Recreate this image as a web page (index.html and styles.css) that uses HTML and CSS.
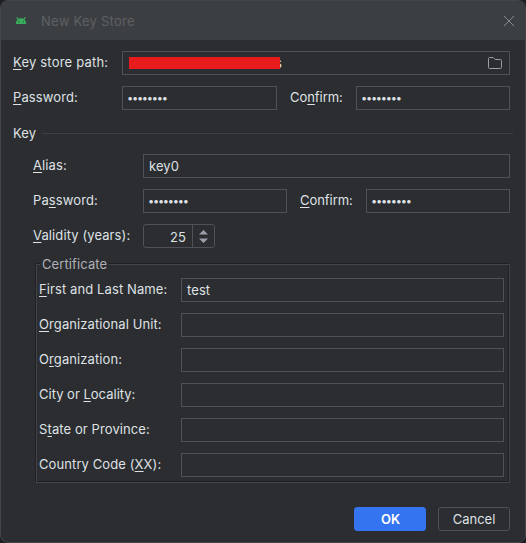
FILE: index.html
```html
<!DOCTYPE html>
<html lang="en">
<head>
<meta charset="utf-8">
<title>New Key Store</title>
<link rel="stylesheet" href="styles.css">
</head>
<body>
<div class="dialog">
  <header class="titlebar">
    <svg class="android" width="12" height="12" viewBox="0 0 12 12"><path d="M1.900 2.200 3.400 5M10.100 2.200 8.600 5" stroke="#38ad5c" stroke-width="1.300"/><path fill="#38ad5c" fill-rule="evenodd" d="M.8 9C1 5.500 3.200 3.300 6 3.300s5 2.200 5.200 5.700ZM3.200 6.300v1h1v-1ZM7.800 6.300v1h1v-1Z"/></svg>
    <h1>New Key Store</h1>
    <svg class="close" width="12" height="12" viewBox="0 0 12 12"><path d="M1 1 11 11M11 1 1 11" stroke="#898c91" fill="none"/></svg>
  </header>
  <main class="content">
    <div class="row store">
      <label class="path-label"><u>K</u>ey store path:</label>
      <div class="field path"><span class="redaction"></span><span class="tail">s</span>
        <svg width="16" height="16" viewBox="0 0 16 16"><path d="M1.500 3.500q0-1 1-1h3.700l2 2h5.300q1 0 1 1v7q0 1-1 1h-11q-1 0-1-1Z" stroke="#9a9da3" fill="none"/></svg>
      </div>
    </div>
    <div class="row store">
      <label><u>P</u>assword:</label>
      <div class="field half dots">••••••••</div>
      <label class="confirm">Co<u>n</u>firm:</label>
      <div class="field dots">••••••••</div>
    </div>
    <div class="separator"><span>Key</span></div>
    <section class="key">
      <div class="row">
        <label><u>A</u>lias:</label>
        <div class="field">key0</div>
      </div>
      <div class="row">
        <label>Pa<u>s</u>sword:</label>
        <div class="field half dots">••••••••</div>
        <label class="confirm"><u>C</u>onfirm:</label>
        <div class="field dots">••••••••</div>
      </div>
      <div class="row">
        <label><u>V</u>alidity (years):</label>
        <div class="spinner"><span>25</span><svg width="21" height="22" viewBox="0 0 21 22"><path fill="#9da0a8" d="M6 9.500 10.500 5 15 9.500ZM6 13.500 10.500 18 15 13.500Z"/></svg></div>
      </div>
    </section>
    <section class="certificate">
      <h2>Certificate</h2>
      <div class="row"><label><u>F</u>irst and Last Name:</label><div class="field">test</div></div>
      <div class="row"><label><u>O</u>rganizational Unit:</label><div class="field"></div></div>
      <div class="row"><label>O<u>r</u>ganization:</label><div class="field"></div></div>
      <div class="row"><label class="tight">City or <u>L</u>ocality:</label><div class="field"></div></div>
      <div class="row"><label>S<u>t</u>ate or Province:</label><div class="field"></div></div>
      <div class="row"><label>Country Code (<u>X</u>X):</label><div class="field"></div></div>
    </section>
    <footer class="actions">
      <button class="primary">OK</button>
      <button>Cancel</button>
    </footer>
  </main>
</div>
</body>
</html>
```
FILE: styles.css
```css
* { box-sizing: border-box; }
body {
  margin: 0;
  background: #1e1f22;
  color: #dfe1e5;
  font: 13px/16px Inter, "Liberation Sans", sans-serif;
  letter-spacing: .1px;
}
.dialog {
  width: 526px;
  height: 543px;
  border: 1px solid #434549;
  border-radius: 8px;
  background: #2b2d30;
  overflow: hidden;
}
.titlebar {
  display: flex;
  align-items: center;
  height: 39px;
  padding: 0 10px 0 14px;
  background: #3c3f41;
}
.titlebar h1 {
  flex: 1;
  margin: 0 0 0 14px;
  font-size: 13px;
  font-weight: 400;
  letter-spacing: .25px;
  color: #5c5f64;
}
.content { padding: 11px 15px 0 12px; }
.row { display: flex; height: 24px; margin-bottom: 11px; }
label { flex: none; width: 109px; padding-top: 3px; white-space: nowrap; }
.path-label { letter-spacing: .2px; }
.tight { letter-spacing: 0; }
u { text-decoration-thickness: 1px; text-underline-offset: 2px; text-decoration-skip-ink: none; }
.field {
  flex: 1;
  min-width: 0;
  height: 24px;
  padding: 3px 5px;
  border: 1px solid #4e5157;
  white-space: nowrap;
}
.store .half { flex: 0 0 155px; }
.key .half { flex: 0 0 144px; }
.confirm { width: 66px; margin-left: 13px; letter-spacing: -.05px; }
.dots { padding-left: 4px; font-size: 11px; line-height: 17px; letter-spacing: -1.23px; }
.path { display: flex; align-items: center; padding: 0 6px; }
.redaction { width: 151px; height: 12px; background: #e81c1c; }
.tail { flex: 1; width: 4px; margin-left: -5px; clip-path: inset(0 0 0 5px); }
.separator { display: flex; align-items: center; gap: 6px; height: 16px; margin: 15px -1px 13px 0; }
.separator::after { content: ""; flex: 1; height: 1px; margin-right: -2px; background: #3e4043; }
.key { padding-left: 20px; }
.key label { width: 110px; }
.key .confirm { width: 66px; }
.spinner {
  display: flex;
  width: 72px;
  height: 24px;
  border: 1px solid #4e5157;
  border-radius: 3px;
}
.spinner span { width: 49px; padding: 4px 6px 0 0; border-right: 1px solid #4e5157; text-align: right; }
.certificate {
  position: relative;
  height: 220px;
  margin: 15px 0 0 22px;
  padding: 15px 5px 0 3px;
  border: 1px solid #1e1f22;
  border-right-color: #434549;
  border-bottom-color: #434549;
  box-shadow: inset 1px 1px #434549, inset -1px -1px #1e1f22;
}
.certificate h2 {
  position: absolute;
  top: -8px;
  left: 4px;
  margin: 0;
  padding: 0 2px;
  background: #2b2d30;
  color: #afb1b6;
  font-size: 13px;
  font-weight: 400;
}
.certificate label { width: 142px; }
.certificate .row { margin-top: -1px; margin-bottom: 12px; }
.actions { display: flex; justify-content: flex-end; gap: 12px; margin-top: 24px; }
button {
  width: 72px;
  height: 24px;
  padding: 0;
  border: 1px solid #4e5157;
  border-radius: 3px;
  background: #2b2d30;
  color: #dfe1e5;
  font: inherit;
  letter-spacing: 0;
}
.primary { padding-left: 1px; border-color: #3574f0; background: #3574f0; color: #fff; font-weight: 600; }
```
